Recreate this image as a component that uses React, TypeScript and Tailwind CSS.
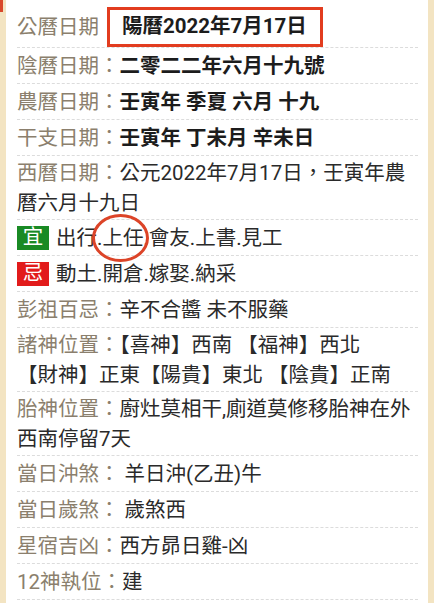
import React from "react";

const labelClass = "text-[#8b7f6d]";
const lineClass = "flex items-center border-b border-dashed border-[#dcdcdc]";

function Row({
  label,
  children,
  bold,
  tall,
}: {
  label: string;
  children: React.ReactNode;
  bold?: boolean;
  tall?: boolean;
}) {
  return (
    <div className={`${lineClass} ${tall ? "h-[64px]" : "h-[36px]"}`}>
      <div className={tall ? "leading-[30px]" : "leading-[28px]"}>
        <span className={labelClass}>{label}：</span>
        <span className={bold ? "font-bold text-[#1c1c1c]" : "text-[#2a2a2a]"}>{children}</span>
      </div>
    </div>
  );
}

function Badge({ text, color }: { text: string; color: string }) {
  return (
    <span
      className={`inline-flex h-[24px] w-[32px] shrink-0 items-center justify-center text-white leading-none ${color}`}
    >
      {text}
    </span>
  );
}

export default function App() {
  return (
    <div className="relative flex min-h-[603px] bg-[#f3e4c2] pl-[6px] pr-[6px] font-['Roboto','Noto_Sans_CJK_TC',sans-serif] text-[20.5px]">
      {/* 左上角的紅色裝飾 */}
      <div className="absolute left-0 top-0 h-[12px] w-[3px] bg-[#d9482b]" />
      <div className="flex-1 bg-white pl-[11px] pr-[10px]">
        <div className={`${lineClass} h-[48px] pt-[6px]`}>
          <span className={`${labelClass} leading-[28px]`}>公曆日期</span>
          <span className="ml-[8px] flex h-[40px] w-[216px] items-center border-[3px] border-[#e23c1f] pl-[12px] font-bold text-[#1c1c1c]">
            陽曆2022年7月17日
          </span>
        </div>
        <Row label="陰曆日期" bold>
          二零二二年六月十九號
        </Row>
        <Row label="農曆日期" bold>
          壬寅年 季夏 六月 十九
        </Row>
        <Row label="干支日期" bold>
          壬寅年 丁未月 辛未日
        </Row>
        <Row label="西曆日期" tall>
          公元2022年7月17日，壬寅年農
          <br />
          曆六月十九日
        </Row>
        <div className={`${lineClass} h-[36px]`}>
          <Badge text="宜" color="bg-[#198a24]" />
          <span className="relative ml-[7px] leading-[28px] text-[#2a2a2a]">
            出行.上任.會友.上書.見工
            <span className="absolute left-[36px] top-[-10px] h-[48px] w-[57px] rounded-[50%] border-[3px] border-[#dc4428]" />
          </span>
        </div>
        <div className={`${lineClass} h-[36px]`}>
          <Badge text="忌" color="bg-[#e21b1b]" />
          <span className="ml-[7px] leading-[28px] text-[#2a2a2a]">動土.開倉.嫁娶.納采</span>
        </div>
        <Row label="彭祖百忌">辛不合醬 未不服藥</Row>
        <Row label="諸神位置" tall>
          【喜神】西南 【福神】西北
          <br />
          【財神】正東【陽貴】東北 【陰貴】正南
        </Row>
        <Row label="胎神位置" tall>
          廚灶莫相干,廁道莫修移胎神在外
          <br />
          西南停留7天
        </Row>
        <Row label="當日沖煞"> 羊日沖(乙丑)牛</Row>
        <Row label="當日歲煞"> 歲煞西</Row>
        <Row label="星宿吉凶">西方昴日雞-凶</Row>
        <Row label="12神執位">建</Row>
      </div>
    </div>
  );
}
